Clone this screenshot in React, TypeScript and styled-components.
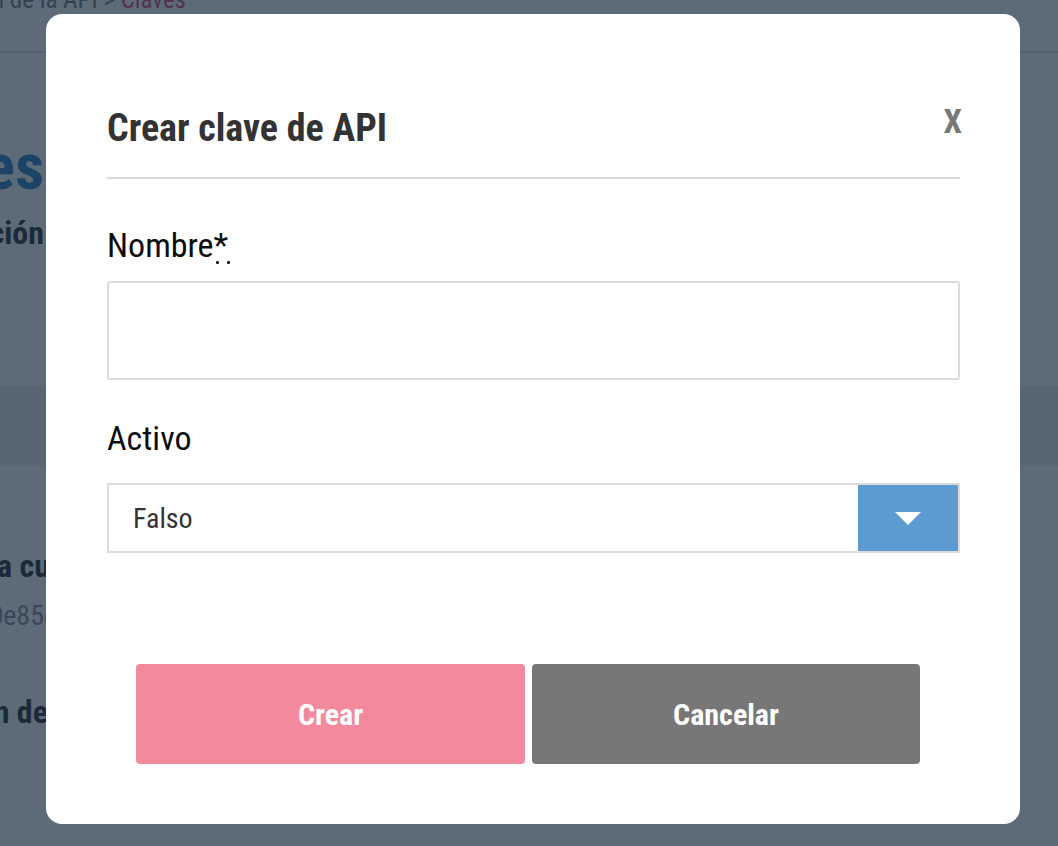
import React from 'react';
import styled, { createGlobalStyle } from 'styled-components';

const GlobalStyle = createGlobalStyle`
  html, body {
    margin: 0;
    padding: 0;
    background: #ffffff;
    overflow: hidden;
  }
  body {
    font-family: "Roboto Condensed", Roboto, "Liberation Sans", sans-serif;
    font-stretch: 85%;
  }
  * { box-sizing: border-box; }
`;

// page behind the modal (mostly covered)
const Page = styled.div`
    width: 1058px;
    height: 846px;
    overflow: hidden;
`;

// a line whose start runs off the left edge of the page
const Trail = styled.div`
    display: flex;
    white-space: nowrap;
`;

const Clip = styled.span<{ $w: number }>`
    display: flex;
    justify-content: flex-end;
    flex: 0 0 ${p => p.$w}px;
    min-width: 0;
    width: ${p => p.$w}px;
`;

const Crumbs = styled(Trail)`
    margin-top: -15px;
    height: 68px;
    font-size: 25px;
    color: #777;
    border-bottom: 2px solid #dcdcdc;

    em { font-style: normal; color: #e0456f; }
`;

const Intro = styled.div`
    padding-top: 80px;
    height: 333px;
`;

const PageTitle = styled(Trail)`
    font-size: 64px;
    line-height: 70px;
    color: #2a78c2;
    font-weight: 700;
`;

const PageSubtitle = styled(Trail)`
    margin-top: 10px;
    font-size: 32px;
    line-height: 40px;
    color: #262626;
    font-weight: 700;
`;

const Band = styled.div`
    height: 80px;
    background: #ededed;
`;

const Details = styled.div`
    padding-top: 80px;
`;

const DetailTitle = styled(Trail)<{ $top: number }>`
    margin-top: ${p => p.$top}px;
    font-size: 32px;
    line-height: 40px;
    font-weight: 700;
    color: #262626;
`;

const DetailValue = styled(Trail)`
    margin-top: 12px;
    font-size: 28px;
    line-height: 36px;
    color: #8a8a8a;
`;

// modal
const Overlay = styled.div`
    position: fixed;
    inset: 0;
    background: rgba(24, 44, 64, 0.7);
    display: flex;
    padding: 14px 38px 22px 46px;
`;

const Dialog = styled.div`
    flex: 1;
    background: #fff;
    border-radius: 16px;
    padding: 0 60px 0 61px;
    display: flex;
    flex-direction: column;
`;

const Header = styled.div`
    display: flex;
    justify-content: space-between;
    align-items: flex-start;
    padding-top: 92px;
    height: 165px;
    border-bottom: 2px solid #d9d9d9;
`;

const Title = styled.h3`
    margin: 0;
    font-size: 38px;
    line-height: 44px;
    font-weight: 700;
    color: #333;
`;

const Close = styled.button`
    border: 0;
    background: none;
    padding: 0;
    margin: -4px -2px 0 0;
    font-family: inherit;
    font-stretch: 85%;
    font-size: 33px;
    line-height: 40px;
    font-weight: 700;
    color: #777;
    cursor: pointer;
`;

const Label = styled.label<{ $top: number; $gap: number }>`
    display: block;
    margin-top: ${p => p.$top}px;
    margin-bottom: ${p => p.$gap}px;
    font-size: 34px;
    line-height: 40px;
    color: #0d0d0d;

    abbr {
        text-decoration: none;
        margin-left: -2px;
        padding: 0 6px 0 2px;
        background: radial-gradient(circle, #111 1.2px, transparent 1.8px) repeat-x;
        background-size: 11px 5px;
        background-position: 1px 100%;
    }
`;

const TextInput = styled.input`
    display: block;
    width: 100%;
    height: 99px;
    border: 2px solid #dcdcdc;
    border-radius: 3px;
    outline: none;
    font-family: inherit;
    font-size: 28px;
`;

const SelectBox = styled.div`
    display: flex;
    height: 70px;
    border: 2px solid #dcdcdc;
`;

const SelectValue = styled.div`
    flex: 1;
    display: flex;
    align-items: center;
    padding-left: 24px;
    font-size: 28px;
    color: #333;
`;

const SelectArrow = styled.div`
    width: 100px;
    background: #5b9bd2;
    display: flex;
    align-items: center;
    justify-content: center;
`;

const Actions = styled.div`
    display: grid;
    grid-template-columns: 389px 388px;
    gap: 7px;
    margin-top: 111px;
    padding-left: 29px;
`;

const ActionButton = styled.button<{ $color: string }>`
    height: 100px;
    border: 0;
    border-radius: 4px;
    background: ${p => p.$color};
    color: #fff;
    font-family: inherit;
    font-stretch: 85%;
    font-size: 30px;
    font-weight: 700;
    cursor: pointer;
`;

const App = () => {
    return <>
        <GlobalStyle />
        <Page>
            <Crumbs>
                <Clip $w={186}><span>Documentación de la API &gt; <em>Claves</em></span></Clip>
            </Crumbs>
            <Intro>
                <PageTitle><Clip $w={44}>Claves</Clip>&nbsp;de API</PageTitle>
                <PageSubtitle><Clip $w={44}>Administración</Clip>&nbsp;de claves</PageSubtitle>
            </Intro>
            <Band />
            <Details>
                <DetailTitle $top={0}><Clip $w={50}>Clave de la cu</Clip>enta</DetailTitle>
                <DetailValue><Clip $w={44}>a31f7c0e85</Clip>d2b94</DetailValue>
                <DetailTitle $top={58}><Clip $w={48}>Configuración de</Clip>&nbsp;la clave</DetailTitle>
            </Details>
        </Page>
        <Overlay>
            <Dialog>
                <Header>
                    <Title>Crear clave de API</Title>
                    <Close>X</Close>
                </Header>
                <Label $top={46} $gap={16}>Nombre<abbr title="obligatorio">*</abbr></Label>
                <TextInput type="text" />
                <Label $top={38} $gap={25}>Activo</Label>
                <SelectBox>
                    <SelectValue>Falso</SelectValue>
                    <SelectArrow>
                        <svg width="26" height="13" viewBox="0 0 26 13">
                            <path d="M0 0h26L13 13z" fill="#fff" />
                        </svg>
                    </SelectArrow>
                </SelectBox>
                <Actions>
                    <ActionButton $color="#f2899d">Crear</ActionButton>
                    <ActionButton $color="#777777">Cancelar</ActionButton>
                </Actions>
            </Dialog>
        </Overlay>
    </>;
}

export default App;
